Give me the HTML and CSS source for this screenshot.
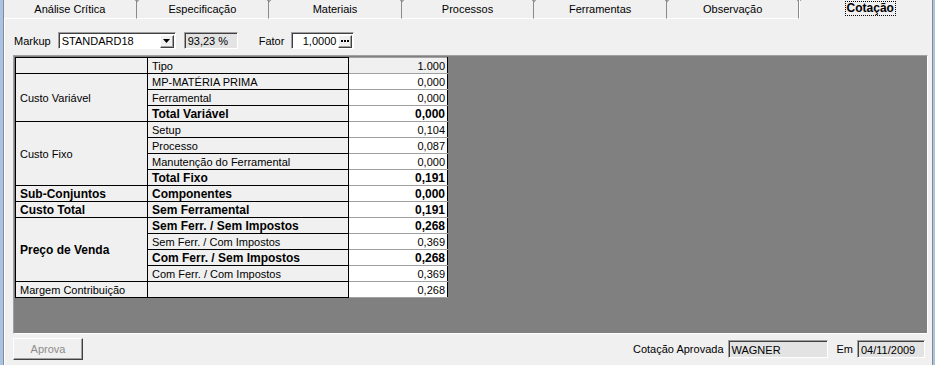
FILE: index.html
```html
<!DOCTYPE html>
<html lang="pt">
<head>
    <meta charset="UTF-8">
    <meta name="viewport" content="width=device-width, initial-scale=1.0">
    <title>Cotação</title>
    <link rel="stylesheet" href="styles.css">
</head>
<body>
    <div class="window">
        <div class="tabs">
            <div class="tab">Análise Crítica</div>
            <div class="tab">Especificação</div>
            <div class="tab">Materiais</div>
            <div class="tab">Processos</div>
            <div class="tab">Ferramentas</div>
            <div class="tab">Observação</div>
            <div class="tab active"><span class="focus">Cotação</span></div>
        </div>

        <div class="page">
            <div class="toolbar">
                <span class="label">Markup</span>
                <div class="field combo">
                    <span class="value">STANDARD18</span>
                    <span class="btn drop">
                        <svg width="7" height="4" viewBox="0 0 7 4"><polygon points="0,0 7,0 3.5,4" fill="#000"/></svg>
                    </span>
                </div>
                <div class="field readonly percent">93,23 %</div>
                <span class="label fator">Fator</span>
                <div class="field fator-box">
                    <span class="value num">1,0000</span>
                    <span class="btn dots">
                        <svg width="8" height="2" viewBox="0 0 8 2"><rect x="0" y="0" width="2" height="2"/><rect x="3" y="0" width="2" height="2"/><rect x="6" y="0" width="2" height="2"/></svg>
                    </span>
                </div>
            </div>

            <div class="grid">
                <table class="cost">
                    <colgroup>
                        <col class="w1">
                        <col class="w2">
                        <col class="w3">
                    </colgroup>
                    <tr>
                        <td class="c1"></td>
                        <td class="c2">Tipo</td>
                        <td class="c3 fixed">1.000</td>
                    </tr>
                    <tr>
                        <td class="c1" rowspan="3">Custo Variável</td>
                        <td class="c2">MP-MATÉRIA PRIMA</td>
                        <td class="c3">0,000</td>
                    </tr>
                    <tr>
                        <td class="c2">Ferramental</td>
                        <td class="c3">0,000</td>
                    </tr>
                    <tr class="bold">
                        <td class="c2">Total Variável</td>
                        <td class="c3">0,000</td>
                    </tr>
                    <tr>
                        <td class="c1" rowspan="4">Custo Fixo</td>
                        <td class="c2">Setup</td>
                        <td class="c3">0,104</td>
                    </tr>
                    <tr>
                        <td class="c2">Processo</td>
                        <td class="c3">0,087</td>
                    </tr>
                    <tr>
                        <td class="c2">Manutenção do Ferramental</td>
                        <td class="c3">0,000</td>
                    </tr>
                    <tr class="bold">
                        <td class="c2">Total Fixo</td>
                        <td class="c3">0,191</td>
                    </tr>
                    <tr class="bold">
                        <td class="c1">Sub-Conjuntos</td>
                        <td class="c2">Componentes</td>
                        <td class="c3">0,000</td>
                    </tr>
                    <tr class="bold">
                        <td class="c1">Custo Total</td>
                        <td class="c2">Sem Ferramental</td>
                        <td class="c3">0,191</td>
                    </tr>
                    <tr class="bold">
                        <td class="c1" rowspan="4">Preço de Venda</td>
                        <td class="c2">Sem Ferr. / Sem Impostos</td>
                        <td class="c3">0,268</td>
                    </tr>
                    <tr>
                        <td class="c2">Sem Ferr. / Com Impostos</td>
                        <td class="c3">0,369</td>
                    </tr>
                    <tr class="bold">
                        <td class="c2">Com Ferr. / Sem Impostos</td>
                        <td class="c3">0,268</td>
                    </tr>
                    <tr>
                        <td class="c2">Com Ferr. / Com Impostos</td>
                        <td class="c3">0,369</td>
                    </tr>
                    <tr>
                        <td class="c1">Margem Contribuição</td>
                        <td class="c2"></td>
                        <td class="c3">0,268</td>
                    </tr>
                </table>
            </div>

            <div class="footer">
                <button class="approve" disabled>Aprova</button>
                <div class="approved">
                    <span class="label">Cotação Aprovada</span>
                    <div class="field readonly user">WAGNER</div>
                    <span class="label em">Em</span>
                    <div class="field readonly date">04/11/2009</div>
                </div>
            </div>
        </div>
    </div>
</body>
</html>
```

FILE: styles.css
```css
body {
    margin: 0;
    background-color: #a9c3e6;
    font-family: "Liberation Sans", Arial, sans-serif;
    font-size: 11px;
    color: #000;
}

.window {
    box-sizing: border-box;
    width: 930px;
    height: 365px;
    margin-left: 3px;
    background-color: #f0f0f0;
    border-left: 1px solid #8a8a8a;
    border-right: 1px solid #8a8a8a;
    display: flex;
    flex-direction: column;
    overflow: hidden;
}

/* onglets */
.tabs {
    display: flex;
    height: 19px;
}

.tab {
    flex: 1;
    position: relative;
    height: 18px;
    display: flex;
    align-items: center;
    justify-content: center;
    border-right: 1px solid #8a8a8a;
    border-bottom: 1px solid #fff;
}

.tab::after {
    content: "";
    position: absolute;
    right: -4px;
    top: -5px;
    width: 5px;
    height: 5px;
    border-right: 1px solid #8a8a8a;
    border-bottom: 1px solid #8a8a8a;
    transform: rotate(45deg);
}

.tab.active {
    height: 19px;
    border-right: none;
    border-bottom: none;
    border-left: 1px solid #fff;
    font-weight: bold;
    font-size: 12px;
    align-items: flex-start;
    padding-top: 1px;
    box-sizing: border-box;
}

.tab.active::after {
    display: none;
}

.focus {
    border: 1px dotted #000;
    padding: 0 1px;
    line-height: 13px;
    margin-left: 8px;
}

.page {
    flex: 1;
    display: flex;
    flex-direction: column;
    border-left: 1px solid #fff;
}

/* barre markup */
.toolbar {
    display: flex;
    align-items: center;
    height: 17px;
    margin-top: 13px;
    padding-left: 9px;
}

.label {
    white-space: nowrap;
}

.field {
    box-sizing: border-box;
    height: 17px;
    display: flex;
    align-items: center;
    background-color: #fff;
    border: 1px solid;
    border-color: #a0a0a0 #fff #fff #a0a0a0;
    box-shadow: inset 1px 1px 0 #404040;
    padding: 1px 1px 0 3px;
}

.field .value {
    flex: 1;
}

.readonly {
    background-color: #e3e3e3;
}

.combo {
    width: 118px;
    margin-left: 7px;
}

.btn {
    box-sizing: border-box;
    width: 14px;
    height: 13px;
    display: flex;
    align-items: center;
    justify-content: center;
    background-color: #f0f0f0;
    border: 1px solid;
    border-color: #fff #404040 #404040 #fff;
    box-shadow: inset -1px -1px 0 #a0a0a0;
}

.percent {
    width: 54px;
    margin-left: 8px;
}

.fator {
    margin-left: 21px;
}

.fator-box {
    width: 63px;
    margin-left: 7px;
}

.num {
    text-align: right;
    padding-right: 2px;
}

/* grille */
.grid {
    box-sizing: border-box;
    width: 915px;
    height: 279px;
    margin: 6px 0 0 8px;
    padding: 1px;
    background-color: #808080;
    border: 1px solid;
    border-color: #a0a0a0 #fff #fff #a0a0a0;
}

.cost {
    border-collapse: collapse;
    table-layout: fixed;
    width: 432px;
}

.w1 { width: 132px; }
.w2 { width: 201px; }
.w3 { width: 99px; }

.cost tr {
    height: 16px;
}

.cost td {
    padding: 0;
    line-height: 14px;
    white-space: nowrap;
    overflow: hidden;
    border: 1px solid #000;
}

.c1 {
    background-color: #f0f0f0;
    padding-left: 4px !important;
    vertical-align: middle;
}

.c2 {
    background-color: #f0f0f0;
    padding-left: 4px !important;
}

.c3 {
    background-color: #fff;
    text-align: right;
    padding-right: 2px !important;
    border-top-color: #a0a0a0 !important;
    border-bottom-color: #a0a0a0 !important;
}

.c3.fixed {
    background-color: #f0f0f0;
}

.bold td {
    font-weight: bold;
    font-size: 12px;
}

/* pied */
.footer {
    display: flex;
    align-items: center;
    justify-content: space-between;
    margin-top: 4px;
    padding: 0 7px 0 8px;
}

.approve {
    width: 70px;
    height: 22px;
    font-family: "Liberation Sans", Arial, sans-serif;
    font-size: 11px;
    color: #8c8c8c;
    background-color: #f0f0f0;
    border: 1px solid;
    border-color: #fff #404040 #404040 #fff;
    box-shadow: inset -1px -1px 0 #a0a0a0;
}

.approved {
    display: flex;
    align-items: center;
}

.user {
    width: 100px;
    height: 18px;
    margin-left: 4px;
}

.em {
    margin-left: 9px;
}

.date {
    width: 68px;
    height: 18px;
    margin-left: 4px;
}
```
